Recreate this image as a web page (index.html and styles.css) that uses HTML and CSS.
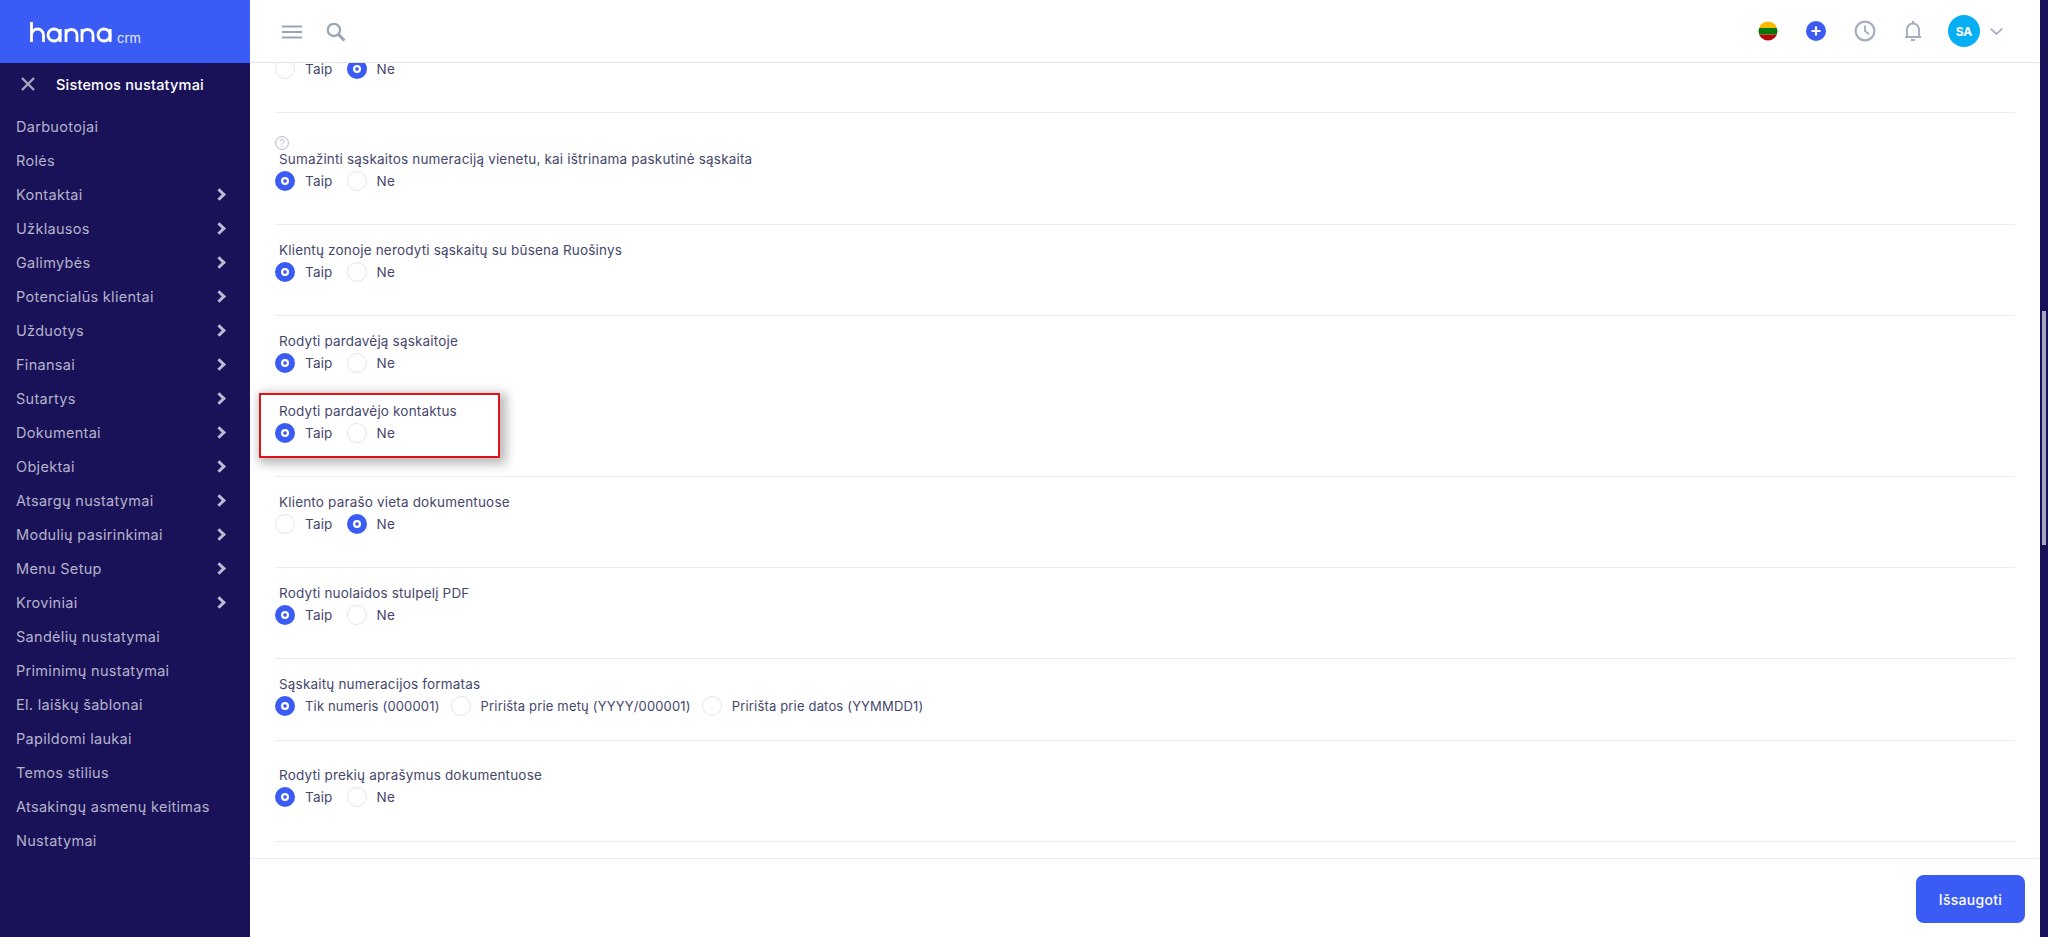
FILE: index.html
```html
<!DOCTYPE html>
<html lang="lt">
<head>
<meta charset="utf-8">
<title>hanna crm</title>
<link rel="stylesheet" href="styles.css">
</head>
<body>
<div class="app">
  <aside class="sidebar">
    <div class="logo">
      <svg class="logo-mark" width="84" height="24" viewBox="0 0 84 24" fill="none" stroke="#fff" stroke-width="2.8" aria-label="hanna">
        <path d="M1.5 1v20M1.5 14a6 6 0 0 1 12 0v7"/>
        <circle cx="24" cy="14" r="6"/><path d="M30.2 8v13"/>
        <path d="M36 21V8M36 14a5.5 5.5 0 0 1 11 0v7"/>
        <path d="M52 21V8M52 14a5.5 5.5 0 0 1 11 0v7"/>
        <circle cx="74" cy="14" r="6"/><path d="M80.2 8v13"/>
      </svg>
      <span class="logo-crm">crm</span>
    </div>
    <div class="side-title">
      <svg width="16" height="16" viewBox="0 0 16 16" stroke="#a3a8bd" stroke-width="2.4"><path d="M2 2l12 12M14 2L2 14"/></svg>
      <span>Sistemos nustatymai</span>
    </div>
    <nav class="menu">
      <a class="menu-item">Darbuotojai</a>
      <a class="menu-item">Rolės</a>
      <a class="menu-item sub">Kontaktai</a>
      <a class="menu-item sub">Užklausos</a>
      <a class="menu-item sub">Galimybės</a>
      <a class="menu-item sub">Potencialūs klientai</a>
      <a class="menu-item sub">Užduotys</a>
      <a class="menu-item sub">Finansai</a>
      <a class="menu-item sub">Sutartys</a>
      <a class="menu-item sub">Dokumentai</a>
      <a class="menu-item sub">Objektai</a>
      <a class="menu-item sub">Atsargų nustatymai</a>
      <a class="menu-item sub">Modulių pasirinkimai</a>
      <a class="menu-item sub">Menu Setup</a>
      <a class="menu-item sub">Kroviniai</a>
      <a class="menu-item">Sandėlių nustatymai</a>
      <a class="menu-item">Priminimų nustatymai</a>
      <a class="menu-item">El. laiškų šablonai</a>
      <a class="menu-item">Papildomi laukai</a>
      <a class="menu-item">Temos stilius</a>
      <a class="menu-item">Atsakingų asmenų keitimas</a>
      <a class="menu-item">Nustatymai</a>
    </nav>
  </aside>

  <div class="main">
    <header class="topbar">
      <div class="top-left">
        <svg width="20" height="14" viewBox="0 0 20 14" stroke="#9aa3b8" stroke-width="2"><path d="M0 1.5h20M0 7h20M0 12.5h20"/></svg>
        <svg width="20" height="20" viewBox="0 0 19 19" fill="none" stroke="#9aa3b8"><circle cx="7.5" cy="7.5" r="5.8" stroke-width="2.2"/><path d="M12 12l5.5 5.5" stroke-width="2.8"/></svg>
      </div>
      <div class="top-right">
        <svg class="flag" width="20" height="20" viewBox="0 0 20 20"><defs><clipPath id="fc"><circle cx="10" cy="10" r="9.5"/></clipPath></defs><g clip-path="url(#fc)"><rect width="20" height="7" fill="#fbb800"/><rect y="7" width="20" height="6.5" fill="#047a04"/><rect y="13.5" width="20" height="6.5" fill="#b40808"/></g></svg>
        <svg width="20" height="20" viewBox="0 0 20 20"><circle cx="10" cy="10" r="10" fill="#3d5af1"/><path d="M10 5.5v9M5.5 10h9" stroke="#fff" stroke-width="2.2"/></svg>
        <svg width="22" height="22" viewBox="0 0 22 22" fill="none" stroke="#a4adc2" stroke-width="2.2"><circle cx="11" cy="11" r="9.4"/><path d="M11 5.5V11l4 3.2" stroke-width="1.8"/></svg>
        <svg width="18" height="22" viewBox="0 0 18 22" fill="none" stroke="#a4adc2" stroke-width="1.9"><path d="M1 17h16M3 17V9.5a6 6 0 0 1 12 0V17"/><path d="M9 1v2.5" stroke-width="2.2"/><path d="M7 20h4" stroke-width="2"/></svg>
        <div class="user">
          <span class="avatar">SA</span>
          <svg width="13" height="7" viewBox="0 0 13 7" fill="none" stroke="#a4adc2" stroke-width="1.7"><path d="M.7.7l5.8 5.3L12.3.7"/></svg>
        </div>
      </div>
    </header>

    <div class="content">
      <div class="settings">
        <section class="group group-first">
          <div class="radios"><label class="radio"><i class="dot"></i>Taip</label><label class="radio"><i class="dot on"></i>Ne</label></div>
        </section>
        <section class="group group-help">
          <svg class="help" width="14" height="14" viewBox="0 0 14 14" fill="none" stroke="#b1b6c9"><circle cx="7" cy="7" r="6.4"/><path d="M5.1 5.4a1.9 1.9 0 1 1 2.9 1.6c-.7.4-1 .8-1 1.5"/><path d="M7 9.6v1.2"/></svg>
          <p class="label">Sumažinti sąskaitos numeraciją vienetu, kai ištrinama paskutinė sąskaita</p>
          <div class="radios"><label class="radio"><i class="dot on"></i>Taip</label><label class="radio"><i class="dot"></i>Ne</label></div>
        </section>
        <section class="group">
          <p class="label">Klientų zonoje nerodyti sąskaitų su būsena Ruošinys</p>
          <div class="radios"><label class="radio"><i class="dot on"></i>Taip</label><label class="radio"><i class="dot"></i>Ne</label></div>
        </section>
        <section class="group">
          <div class="field">
            <p class="label">Rodyti pardavėją sąskaitoje</p>
            <div class="radios"><label class="radio"><i class="dot on"></i>Taip</label><label class="radio"><i class="dot"></i>Ne</label></div>
          </div>
          <div class="field field-marked">
            <span class="mark"></span>
            <p class="label">Rodyti pardavėjo kontaktus</p>
            <div class="radios"><label class="radio"><i class="dot on"></i>Taip</label><label class="radio"><i class="dot"></i>Ne</label></div>
          </div>
        </section>
        <section class="group">
          <p class="label">Kliento parašo vieta dokumentuose</p>
          <div class="radios"><label class="radio"><i class="dot"></i>Taip</label><label class="radio"><i class="dot on"></i>Ne</label></div>
        </section>
        <section class="group">
          <p class="label">Rodyti nuolaidos stulpelį PDF</p>
          <div class="radios"><label class="radio"><i class="dot on"></i>Taip</label><label class="radio"><i class="dot"></i>Ne</label></div>
        </section>
        <section class="group group-short">
          <p class="label">Sąskaitų numeracijos formatas</p>
          <div class="radios radios-tight"><label class="radio"><i class="dot on"></i>Tik numeris (000001)</label><label class="radio"><i class="dot"></i>Pririšta prie metų (YYYY/000001)</label><label class="radio"><i class="dot"></i>Pririšta prie datos (YYMMDD1)</label></div>
        </section>
        <section class="group group-tall">
          <p class="label">Rodyti prekių aprašymus dokumentuose</p>
          <div class="radios"><label class="radio"><i class="dot on"></i>Taip</label><label class="radio"><i class="dot"></i>Ne</label></div>
        </section>
      </div>
    </div>

    <footer class="footer"><button class="save">Išsaugoti</button></footer>
  </div>

  <div class="scrollbar"><div class="thumb"></div></div>
</div>
</body>
</html>
```
FILE: styles.css
```css
* { box-sizing: border-box; }
html, body { margin: 0; height: 100%; overflow: hidden; }
body { font-family: Inter, "Liberation Sans", sans-serif; background: #fff; color: #3f4266; }
.app { display: flex; width: 2048px; height: 937px; }

.sidebar { width: 250px; flex: none; background: #1a1259; color: #b4b3c9; }
.logo { height: 63px; background: #3b5bf5; display: flex; align-items: flex-end; padding: 0 0 18px 30px; gap: 3px; }
.logo-mark { display: block; }
.logo-crm { color: #fff; font-size: 13px; line-height: 14px; opacity: .9; }
.side-title { height: 42px; display: flex; align-items: center; gap: 20px; padding-left: 20px; color: #fff; font-size: 14.5px; font-weight: 500; letter-spacing: .19px; }
.menu { display: flex; flex-direction: column; padding-top: 4px; }
.menu-item { height: 34px; display: flex; align-items: center; justify-content: space-between; padding: 0 26px 0 16px; font-size: 14.5px; letter-spacing: .3px; }
.menu-item.sub::after { content: ""; width: 6px; height: 6px; border: solid #b9bdd4; border-width: 3px 3px 0 0; transform: rotate(45deg); }

.main { flex: 1; min-width: 0; display: flex; flex-direction: column; }
.topbar { height: 63px; flex: none; border-bottom: 1px solid #e3e3ee; display: flex; align-items: center; justify-content: space-between; padding: 0 37px 0 32px; background: #fff; position: relative; z-index: 1; }
.top-left { display: flex; align-items: center; gap: 24px; padding-top: 1px; }
.top-right { display: flex; align-items: center; gap: 28px; }
.user { display: flex; align-items: center; gap: 10px; margin-left: -2px; }
.avatar { width: 32px; height: 32px; border-radius: 50%; background: #06aef4; color: #fff; font-size: 12px; font-weight: 700; display: flex; align-items: center; justify-content: center; }

.content { flex: 1; min-height: 0; overflow: hidden; padding: 0 25px; }
.settings { margin-top: -22px; }
.group { padding: 15px 0 33px; border-bottom: 1px solid #ececf2; }
.group-first { padding-top: 17px; }
.group-help { padding-top: 23px; }
.group-short { padding-bottom: 24px; }
.group-tall { padding-top: 24px; padding-bottom: 34px; }
.field + .field { margin-top: 28px; }
.field-marked { position: relative; }
.mark { position: absolute; left: -16px; top: -8px; width: 241px; height: 65px; border: 2px solid #e0131a; box-shadow: 3px 3px 10px 3px rgba(0,0,0,.28); pointer-events: none; }
.help { display: block; margin-bottom: -1px; }
.label { margin: 0 0 0 4px; font-size: 13.5px; line-height: 21px; letter-spacing: .18px; color: #45476c; }
.radios { display: flex; gap: 14px; height: 21px; }
.radio { display: flex; align-items: center; gap: 10px; font-size: 13.5px; letter-spacing: .18px; color: #45476c; }
.radios-tight { gap: 11px; }
.radios-tight .radio { font-size: 13px; letter-spacing: .17px; }
.dot { width: 20px; height: 20px; flex: none; border-radius: 50%; border: 1px solid #e3e5ea; background: #fff; position: relative; }
.dot.on { border: 0; background: #3b5bf5; }
.dot.on::after { content: ""; position: absolute; left: 6px; top: 6px; width: 8px; height: 8px; border-radius: 50%; background: radial-gradient(circle, #3b5bf5 0 1.4px, #fff 2px); }

.footer { height: 79px; flex: none; border-top: 1px solid #ececf2; display: flex; justify-content: flex-end; align-items: flex-start; padding: 16px 15px 0 0; }
.save { width: 109px; height: 48px; border: 0; border-radius: 8px; background: #3b5bf5; color: #fff; font: 500 14px Inter, "Liberation Sans", sans-serif; letter-spacing: .3px; }

.scrollbar { width: 8px; flex: none; background: #1a1259; padding: 311px 2px 0; }
.thumb { height: 234px; background: #a3a8c0; }
```
